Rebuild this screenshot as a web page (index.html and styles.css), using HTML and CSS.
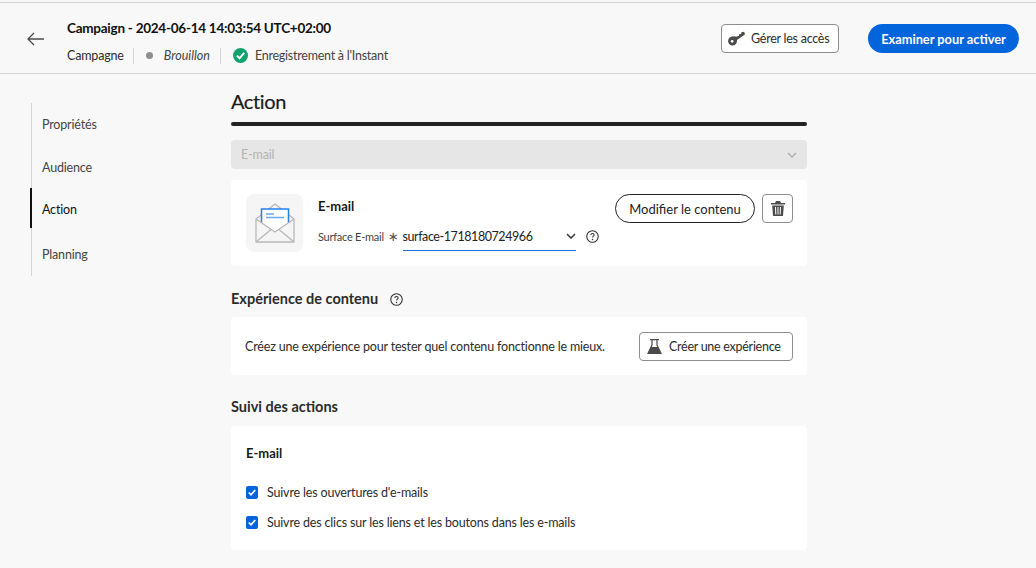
FILE: index.html
```html
<!DOCTYPE html>
<html lang="fr">
<head>
    <meta charset="UTF-8">
    <title>Campaign</title>
    <link rel="stylesheet" href="styles.css">
</head>
<body>
    <header class="topbar">
        <svg class="back" width="18" height="14" viewBox="0 0 18 14"><path d="M7 1 1 7l6 6M1 7h16" fill="none" stroke="#4b4b4b" stroke-width="1.3"/></svg>
        <div class="titles">
            <div class="title">Campaign - 2024-06-14 14:03:54 UTC+02:00</div>
            <div class="meta">
                <span class="meta-item">Campagne</span>
                <span class="meta-item status"><i class="dot"></i><em>Brouillon</em></span>
                <span class="saved">
                    <svg width="15" height="15" viewBox="0 0 15 15"><circle cx="7.5" cy="7.5" r="7.5" fill="#12a26c"/><path d="M3.9 7.6 6.500 10.300 11.200 4.900" fill="none" stroke="#fff" stroke-width="2"/></svg>
                    Enregistrement à l'Instant
                </span>
            </div>
        </div>
        <button class="btn btn-square btn-access">
            <svg width="18" height="15" viewBox="0 0 17 14"><path fill="#4b4b4b" fill-rule="evenodd" d="M5 5.200a4.200 4.200 0 1 0 3.400 3.300L16 3.200 15.300.6l-2.600.4-.4 1.700-1.700.3-.4 1.600-1.500.3-.8.4A4 4 0 0 0 5 5.200ZM3.900 8.300a1.400 1.400 0 1 1 0 2.800 1.400 1.400 0 0 1 0-2.800Z"/></svg>
            Gérer les accès
        </button>
        <button class="btn-primary">Examiner pour activer</button>
    </header>

    <div class="page">
        <nav class="sidenav">
            <a class="nav-item first">Propriétés</a>
            <a class="nav-item">Audience</a>
            <a class="nav-item active">Action</a>
            <a class="nav-item planning">Planning</a>
        </nav>

        <main class="content">
            <h2 class="main-title">Action</h2>
            <div class="rule"></div>

            <div class="select-disabled">
                <span>E-mail</span>
                <svg width="10" height="6" viewBox="0 0 10 6"><path d="M1 1l4 4 4-4" fill="none" stroke="#b3b3b3" stroke-width="1.600"/></svg>
            </div>

            <section class="card card-email">
                <div class="thumb">
                    <svg width="42" height="42" viewBox="0 0 42 42">
                        <path d="M2 17 21 2l19 15v23H2Z" fill="#f5f5f5" stroke="#b8b8b8" stroke-width="1.300" stroke-linejoin="round"/>
                        <path d="M7.500 21V7h27v14l-13.500 9Z" fill="#fff"/>
                        <path d="M7.500 21V7h27v14" fill="none" stroke="#2680eb" stroke-width="1.500"/>
                        <path d="M12 12h8M12 15.500h18" stroke="#68a9ef" stroke-width="1.300"/>
                        <path d="M2 17l19 13 19-13M2 40l15-12.500M40 40 25 27.500" fill="none" stroke="#b8b8b8" stroke-width="1.300"/>
                    </svg>
                </div>
                <div class="email-fields">
                    <div class="email-name">E-mail</div>
                    <div class="field-row">
                        <label class="field-label">Surface E-mail</label>
                        <span class="req">∗</span>
                        <div class="combo">
                            <span>surface-1718180724966</span>
                            <svg width="10" height="6" viewBox="0 0 10 6"><path d="M1 1l4 4 4-4" fill="none" stroke="#3b3b3b" stroke-width="1.600"/></svg>
                        </div>
                        <svg class="help" width="13" height="13" viewBox="0 0 12 12"><circle cx="6" cy="6" r="5.300" fill="none" stroke="#333"/><path d="M4.500 4.700C4.500 3.800 5.200 3.300 6 3.300s1.500.5 1.500 1.300C7.500 5.700 6 5.700 6 7" fill="none" stroke="#333"/><circle cx="6" cy="8.700" r=".7" fill="#333"/></svg>
                    </div>
                </div>
                <button class="btn-outline">Modifier le contenu</button>
                <button class="btn btn-icon">
                    <svg width="14" height="15" viewBox="0 0 14 15"><path fill="#4b4b4b" d="M5 0h4l1 2h4v1.500H0V2h4ZM1.200 4.500h11.600L12 15H2ZM4 6l.3 7.500h1L5 6Zm2.500 0v7.500h1V6ZM9 6l-.3 7.500h1L10 6Z"/></svg>
                </button>
            </section>

            <h3 class="section-title with-help">
                Expérience de contenu
                <svg width="13" height="13" viewBox="0 0 12 12"><circle cx="6" cy="6" r="5.300" fill="none" stroke="#333"/><path d="M4.500 4.700C4.500 3.800 5.200 3.300 6 3.300s1.500.5 1.500 1.300C7.500 5.700 6 5.700 6 7" fill="none" stroke="#333"/><circle cx="6" cy="8.700" r=".7" fill="#333"/></svg>
            </h3>
            <section class="card card-exp">
                <p>Créez une expérience pour tester quel contenu fonctionne le mieux.</p>
                <button class="btn btn-square btn-exp">
                    <svg width="15" height="15" viewBox="0 0 15 15"><path d="M3 .7h9M5 1v5L1 14.300h13L10 6V1" fill="none" stroke="#4b4b4b" stroke-width="1.200"/><path d="M4 8h7l3 6.500H1Z" fill="#4b4b4b"/></svg>
                    Créer une expérience
                </button>
            </section>

            <h3 class="section-title tracking">Suivi des actions</h3>
            <section class="card card-track">
                <div class="email-name">E-mail</div>
                <label class="check"><span class="box"><svg width="8" height="7" viewBox="0 0 8 7"><path d="M.8 3.500 3 5.800 7.200 1" fill="none" stroke="#fff" stroke-width="1.700"/></svg></span>Suivre les ouvertures d'e-mails</label>
                <label class="check"><span class="box"><svg width="8" height="7" viewBox="0 0 8 7"><path d="M.8 3.500 3 5.800 7.200 1" fill="none" stroke="#fff" stroke-width="1.700"/></svg></span>Suivre des clics sur les liens et les boutons dans les e-mails</label>
            </section>
        </main>
    </div>
</body>
</html>
```

FILE: styles.css
```css
* {
    box-sizing: border-box;
}
html, body {
    height: 568px;
    overflow: hidden;
}
body {
    margin: 0;
    padding-top: 2px;
    background: #f8f8f8;
    color: #2c2c2c;
    font-family: Lato, "Noto Sans", sans-serif;
    font-size: 12.5px;
    letter-spacing: -0.17px;
}
button {
    font-family: inherit;
    cursor: pointer;
}

/* top bar */
.topbar {
    height: 72px;
    display: flex;
    align-items: center;
    border-top: 1px solid #d5d5d5;
    border-bottom: 1px solid #d5d5d5;
    padding: 0 17px 0 27px;
}
.back {
    margin-top: 1px;
}
.titles {
    margin-left: 22px;
    flex: 1;
}
.title {
    font-size: 13.5px;
    font-weight: 700;
    letter-spacing: -0.25px;
    color: #111;
    line-height: 18px;
    margin-top: 7px;
}
.meta {
    display: flex;
    align-items: center;
    margin-top: 10px;
    height: 18px;
}
.meta-item {
    display: flex;
    align-items: center;
    height: 16px;
    padding-right: 9px;
    margin-right: 12px;
    border-right: 1px solid #d5d5d5;
}
.status {
    padding-right: 10px;
}
.status em {
    color: #444;
    letter-spacing: 0;
}
.dot {
    width: 7px;
    height: 7px;
    border-radius: 50%;
    background: #8e8e8e;
    margin-right: 11px;
}
.saved {
    display: flex;
    align-items: center;
    gap: 7px;
    color: #444;
    letter-spacing: -0.25px;
}
.btn {
    display: flex;
    align-items: center;
    background: #fff;
    border: 1px solid #8e8e8e;
    border-radius: 4px;
    color: #2c2c2c;
    font-size: 12.5px;
    height: 29px;
    padding: 0;
}
.btn-access {
    width: 118px;
    gap: 5px;
    padding-left: 6px;
    margin-right: 29px;
    margin-top: 1px;
    letter-spacing: -0.25px;
}
.btn-primary {
    width: 151px;
    height: 29px;
    margin-top: 1px;
    border: none;
    border-radius: 15px;
    background: #0265dc;
    color: #fff;
    font-size: 12.8px;
    font-weight: 700;
}

/* layout */
.page {
    display: flex;
    padding-left: 31px;
}
.sidenav {
    width: 200px;
    height: 173px;
    margin-top: 29px;
    border-left: 1px solid #d5d5d5;
    display: flex;
    flex-direction: column;
}
.nav-item {
    height: 43px;
    margin-left: -2px;
    padding-left: 10px;
    display: flex;
    align-items: center;
    border-left: 2px solid transparent;
    color: #444;
}
.nav-item.first {
    height: 44px;
}
.nav-item.active {
    height: 40px;
    padding-top: 3px;
    color: #111;
    border-left-color: #111;
}
.nav-item.planning {
    margin-top: 6px;
}
.content {
    width: 576px;
}
.main-title {
    margin: 15px 0 0;
    font-size: 20px;
    font-weight: 400;
    letter-spacing: -0.4px;
    line-height: 24px;
    color: #1a1a1a;
    -webkit-text-stroke: 0.2px #1a1a1a;
}
.rule {
    height: 4px;
    margin-top: 9px;
    border-radius: 2px;
    background: #222;
}
.select-disabled {
    height: 29px;
    margin-top: 14px;
    padding: 0 10px;
    border-radius: 4px;
    background: #e6e6e6;
    color: #b3b3b3;
    display: flex;
    align-items: center;
    justify-content: space-between;
}

/* cards */
.card {
    background: #fff;
    border-radius: 4px;
}
.card-email {
    height: 86px;
    margin-top: 11px;
    padding: 14px 14px 0 15px;
    display: flex;
    align-items: flex-start;
}
.thumb {
    width: 57px;
    height: 58px;
    border-radius: 8px;
    background: #f5f5f5;
    display: flex;
    align-items: center;
    justify-content: center;
}
.email-fields {
    margin-left: 15px;
    flex: 1;
}
.email-name {
    font-size: 13px;
    font-weight: 700;
    letter-spacing: 0;
    color: #1a1a1a;
    line-height: 18px;
    margin-top: 3px;
}
.field-row {
    display: flex;
    align-items: center;
    margin-top: 7px;
}
.field-label {
    font-size: 11px;
    letter-spacing: -0.25px;
    color: #444;
}
.req {
    margin-left: 4px;
    color: #555;
    font-size: 13px;
    font-family: "DejaVu Sans", sans-serif;
}
.combo {
    width: 173px;
    height: 29px;
    margin-left: 4px;
    border-bottom: 1px solid #1473e6;
    display: flex;
    align-items: center;
    justify-content: space-between;
    color: #222;
    letter-spacing: -0.42px;
}
.help {
    margin-left: 10px;
}
.btn-outline {
    width: 140px;
    height: 29px;
    background: #fff;
    border: 1px solid #222;
    border-radius: 15px;
    color: #222;
    font-size: 13px;
    letter-spacing: 0;
}
.btn-icon {
    width: 31px;
    margin-left: 7px;
    justify-content: center;
}
.section-title {
    margin: 0;
    font-size: 14.5px;
    font-weight: 700;
    letter-spacing: 0;
    color: #2c2c2c;
    line-height: 18px;
}
.with-help {
    margin-top: 24px;
    display: flex;
    align-items: center;
    gap: 12px;
}
.card-exp {
    height: 58px;
    margin-top: 9px;
    padding: 0 14px;
    display: flex;
    align-items: center;
    justify-content: space-between;
}
.card-exp p {
    margin: 0;
    color: #2c2c2c;
}
.btn-exp {
    width: 154px;
    gap: 7px;
    padding-left: 7px;
    letter-spacing: -0.27px;
}
.tracking {
    margin-top: 23px;
}
.card-track {
    height: 124px;
    margin-top: 10px;
    padding: 14px 15px 0;
}
.card-track .email-name {
    margin-top: 4px;
    margin-bottom: 21px;
}
.check {
    display: flex;
    align-items: center;
    height: 18px;
    margin-bottom: 12px;
    color: #2c2c2c;
}
.box {
    width: 12px;
    height: 13px;
    margin-right: 9px;
    border-radius: 2px;
    background: #0265dc;
    display: flex;
    align-items: center;
    justify-content: center;
}
```
